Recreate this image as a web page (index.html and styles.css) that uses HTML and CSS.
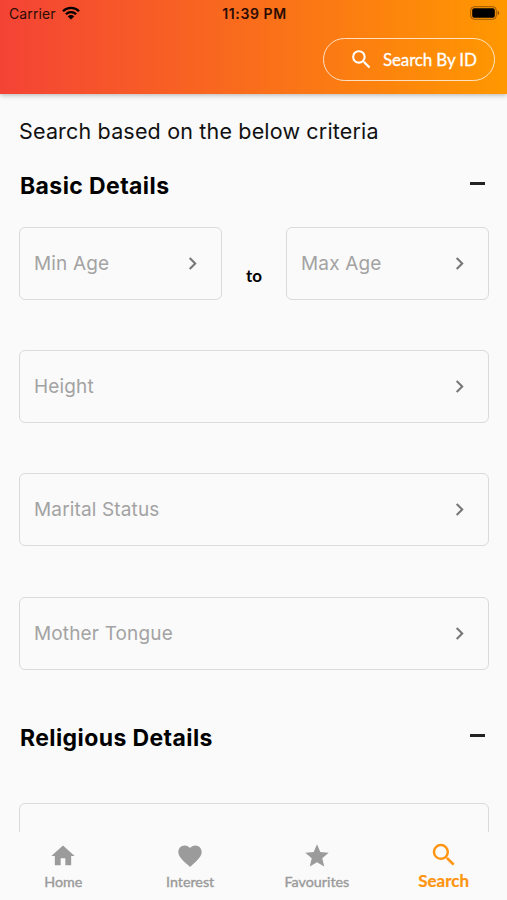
FILE: index.html
```html
<!DOCTYPE html>
<html lang="en">
<head>
    <meta charset="UTF-8">
    <meta name="viewport" content="width=device-width, initial-scale=1.0">
    <title>Search</title>
    <link rel="stylesheet" href="styles.css">
</head>
<body>
    <header>
        <div class="status-bar">
            <div class="carrier">
                <span class="carrier-name">Carrier</span>
                <svg class="wifi" viewBox="0 0 18 14">
                    <path d="M1 5.2a11.4 11.4 0 0 1 16 0M3.9 8.3a7.2 7.2 0 0 1 10.2 0" fill="none" stroke="currentColor" stroke-width="2.3"/>
                    <path d="M9 13.6L5.8 10.4a4.6 4.6 0 0 1 6.4 0z" fill="currentColor"/>
                </svg>
            </div>
            <span class="time">11:39 PM</span>
            <svg class="battery" viewBox="0 0 30 14">
                <rect x=".7" y=".7" width="25.6" height="12.6" rx="3.6" fill="none" stroke="#000" stroke-opacity=".4"/>
                <rect x="2.2" y="2.2" width="22.6" height="9.6" rx="2" fill="#000"/>
                <path d="M27.6 4.8v4.4c1-.4 1.6-1.2 1.6-2.2s-.6-1.8-1.6-2.2z" fill="#000" fill-opacity=".45"/>
            </svg>
        </div>
        <button class="search-id">
            <svg viewBox="0 0 24 24"><path d="M15.5 14h-.79l-.28-.27A6.47 6.47 0 0 0 16 9.5 6.5 6.5 0 1 0 9.5 16c1.61 0 3.09-.59 4.23-1.57l.27.28v.79l5 4.99L20.49 19l-4.99-5zm-6 0C7.01 14 5 11.99 5 9.5S7.01 5 9.5 5 14 7.01 14 9.5 11.99 14 9.5 14z"/></svg>
            <span>Search By ID</span>
        </button>
    </header>

    <main>
        <p class="intro">Search based on the below criteria</p>

        <section>
            <div class="section-title">
                <h2>Basic Details</h2>
                <span class="minus"></span>
            </div>
            <div class="fields">
                <div class="age-row">
                    <div class="field">
                        <span>Min Age</span>
                        <svg viewBox="0 0 24 24"><path d="M10 6L8.59 7.41 13.17 12l-4.58 4.59L10 18l6-6z"/></svg>
                    </div>
                    <span class="to">to</span>
                    <div class="field">
                        <span>Max Age</span>
                        <svg viewBox="0 0 24 24"><path d="M10 6L8.59 7.41 13.17 12l-4.58 4.59L10 18l6-6z"/></svg>
                    </div>
                </div>
                <div class="field">
                    <span>Height</span>
                    <svg viewBox="0 0 24 24"><path d="M10 6L8.59 7.41 13.17 12l-4.58 4.59L10 18l6-6z"/></svg>
                </div>
                <div class="field">
                    <span>Marital Status</span>
                    <svg viewBox="0 0 24 24"><path d="M10 6L8.59 7.41 13.17 12l-4.58 4.59L10 18l6-6z"/></svg>
                </div>
                <div class="field">
                    <span>Mother Tongue</span>
                    <svg viewBox="0 0 24 24"><path d="M10 6L8.59 7.41 13.17 12l-4.58 4.59L10 18l6-6z"/></svg>
                </div>
            </div>
        </section>

        <section class="religious">
            <div class="section-title">
                <h2>Religious Details</h2>
                <span class="minus"></span>
            </div>
            <div class="fields">
                <div class="field"></div>
            </div>
        </section>
    </main>

    <nav>
        <a class="tab">
            <svg viewBox="0 0 24 24"><path d="M10 20v-6h4v6h5v-8h3L12 3 2 12h3v8z"/></svg>
            <span>Home</span>
        </a>
        <a class="tab">
            <svg viewBox="0 0 24 24"><path d="M12 21.35l-1.45-1.32C5.4 15.36 2 12.28 2 8.5 2 5.42 4.42 3 7.5 3c1.74 0 3.41.81 4.5 2.09C13.09 3.81 14.76 3 16.5 3 19.58 3 22 5.42 22 8.5c0 3.78-3.4 6.86-8.55 11.54L12 21.35z"/></svg>
            <span>Interest</span>
        </a>
        <a class="tab">
            <svg viewBox="0 0 24 24"><path d="M12 17.27L18.18 21l-1.64-7.03L22 9.24l-7.19-.61L12 2 9.19 8.63 2 9.24l5.46 4.73L5.82 21z"/></svg>
            <span>Favourites</span>
        </a>
        <a class="tab active">
            <svg viewBox="0 0 24 24"><path d="M15.5 14h-.79l-.28-.27A6.47 6.47 0 0 0 16 9.5 6.5 6.5 0 1 0 9.5 16c1.61 0 3.09-.59 4.23-1.57l.27.28v.79l5 4.99L20.49 19l-4.99-5zm-6 0C7.01 14 5 11.99 5 9.5S7.01 5 9.5 5 14 7.01 14 9.5 11.99 14 9.5 14z"/></svg>
            <span>Search</span>
        </a>
    </nav>
</body>
</html>
```
FILE: styles.css
```css
* {
    box-sizing: border-box;
}

body {
    margin: 0;
    height: 900px;
    display: flex;
    flex-direction: column;
    overflow: hidden;
    background-color: #fafafa;
    font-family: Inter, "Liberation Sans", sans-serif;
    color: #111;
}

svg {
    display: block;
    flex-shrink: 0;
    fill: currentColor;
}

header {
    height: 94px;
    flex-shrink: 0;
    display: flex;
    flex-direction: column;
    background: linear-gradient(to right, #f44336, #ff9800);
    box-shadow: 0 1px 5px rgba(0, 0, 0, 0.3);
}

.status-bar {
    height: 27px;
    padding: 0 7px 0 9px;
    display: grid;
    grid-template-columns: 1fr auto 1fr;
    align-items: center;
    font-size: 14px;
    color: #2a0c05;
}

.carrier {
    display: flex;
    align-items: center;
    gap: 6px;
}

.carrier-name {
    letter-spacing: 0.1px;
}

.wifi {
    width: 18px;
    height: 14px;
    margin-top: -2px;
    color: #000;
}

.time {
    font-weight: 600;
    letter-spacing: 0.6px;
}

.battery {
    width: 30px;
    height: 14px;
    margin-top: -1px;
    justify-self: end;
}

.search-id {
    width: 172px;
    height: 43px;
    margin: 11px 12px 0 auto;
    padding: 0 0 0 25px;
    display: flex;
    align-items: center;
    gap: 9px;
    border: 1.4px solid rgba(255, 255, 255, 0.75);
    border-radius: 22px;
    background: none;
    color: white;
    font-family: Lato, sans-serif;
    font-size: 17px;
    font-weight: 400;
    letter-spacing: -0.15px;
    -webkit-text-stroke: 0.3px;
    white-space: nowrap;
}

.search-id svg {
    width: 25px;
    height: 25px;
}

main {
    flex: 1;
    min-height: 0;
    overflow: hidden;
    padding: 0 18px 0 19px;
}

.intro {
    margin: 24px 0 0;
    font-size: 21.5px;
    line-height: 27px;
    letter-spacing: 0.17px;
    white-space: nowrap;
}

.section-title {
    height: 30px;
    margin-top: 25px;
    padding: 0 4px 0 1px;
    display: flex;
    justify-content: space-between;
}

h2 {
    margin: 0;
    font-size: 23px;
    line-height: 32px;
    font-weight: 650;
    letter-spacing: 0.4px;
    color: #000;
}

.minus {
    width: 15px;
    height: 3px;
    margin-top: 12px;
    background-color: #222;
}

.fields {
    margin-top: 26.6px;
    display: flex;
    flex-direction: column;
    gap: 50.4px;
}

.age-row {
    display: grid;
    grid-template-columns: 203px 1fr 203px;
}

.field {
    height: 73px;
    padding: 0 16px 0 14px;
    display: flex;
    align-items: center;
    justify-content: space-between;
    border: 1px solid #dadada;
    border-radius: 6px;
    font-size: 19px;
    letter-spacing: 0.15px;
    color: #a3a3a3;
}

.field svg {
    width: 25px;
    height: 25px;
    color: #777;
}

.to {
    padding-top: 37px;
    text-align: center;
    font-family: Lato, sans-serif;
    font-size: 17px;
    line-height: 24px;
    font-weight: 700;
    color: #000;
}

.religious .section-title {
    margin-top: 52.4px;
}

.religious .fields {
    margin-top: 51px;
}

nav {
    height: 68px;
    flex-shrink: 0;
    display: grid;
    grid-template-columns: repeat(4, 1fr);
    background-color: #fafafa;
}

.tab {
    padding-top: 10px;
    display: flex;
    flex-direction: column;
    align-items: center;
    font-family: Lato, sans-serif;
    font-size: 14.3px;
    line-height: 18px;
    -webkit-text-stroke: 0.4px;
    color: #9b9b9b;
}

.tab svg {
    width: 28px;
    height: 28px;
    margin-bottom: 3px;
}

.tab.active {
    padding-top: 8px;
    font-size: 17px;
    font-weight: 700;
    -webkit-text-stroke: 0.2px;
    color: #ff9410;
}

.tab.active svg {
    width: 30px;
    height: 30px;
    margin-bottom: 2px;
}
```
